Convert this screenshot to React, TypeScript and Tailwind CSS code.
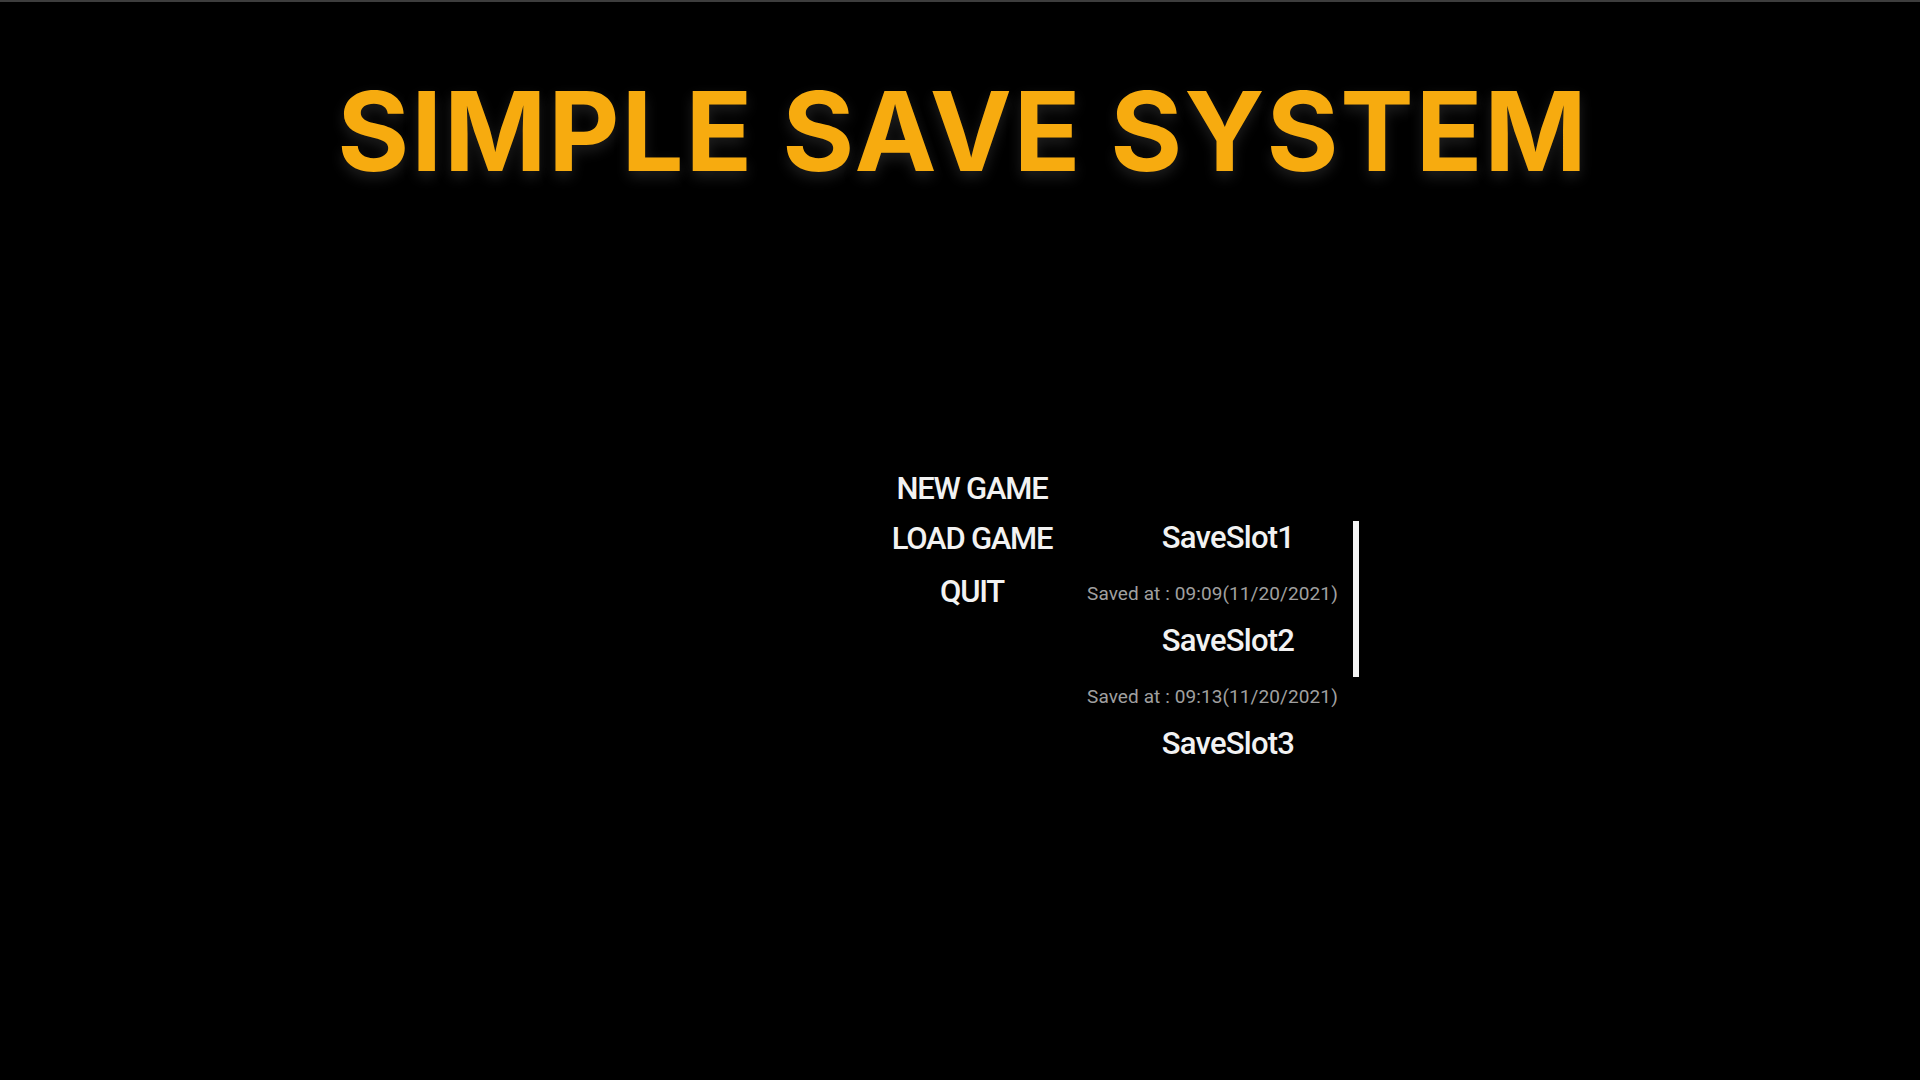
const menuItems = ["NEW GAME", "LOAD GAME", "QUIT"];

const saveSlots = [
  { name: "SaveSlot1", savedAt: "09:09(11/20/2021)" },
  { name: "SaveSlot2", savedAt: "09:13(11/20/2021)" },
  { name: "SaveSlot3", savedAt: null },
];

function SlotEntry({ name, savedAt }: { name: string; savedAt: string | null }) {
  return (
    <div className="flex flex-col">
      <button className="w-[282px] text-center text-[31px] leading-none font-medium tracking-[-0.025em] text-[#f2f2f2]">
        {name}
      </button>
      {savedAt && (
        <span className="mt-[31px] mb-[22px] text-[19px] leading-none tracking-[0.005em] text-[#a0a0a0]">
          Saved at : {savedAt}
        </span>
      )}
    </div>
  );
}

export default function App() {
  return (
    <div
      className="min-h-screen h-[1080px] bg-black border-t-2 border-[#3d3d3d] overflow-hidden"
      style={{ fontFamily: "Roboto, 'Liberation Sans', sans-serif" }}
    >
      <h1
        className="mt-[74px] pl-[6px] text-center text-[110px] leading-none font-bold text-[#f7ab0f] tracking-[0.017em] [text-shadow:0_6px_14px_rgba(90,90,90,0.35)]"
        style={{ fontFamily: "Inter, 'Liberation Sans', sans-serif" }}
      >
        SIMPLE SAVE SYSTEM
      </h1>

      <div className="mt-[287px] ml-[872px] flex items-start">
        {/* main menu */}
        <div className="w-[200px] flex flex-col items-center">
          <button className="text-[31px] leading-none font-medium tracking-[-0.04em] text-[#f2f2f2]">
            {menuItems[0]}
          </button>
          <button className="mt-[19px] text-[31px] leading-none font-medium tracking-[-0.04em] text-[#f2f2f2]">
            {menuItems[1]}
          </button>
          <button className="mt-[22px] text-[31px] leading-none font-medium tracking-[-0.04em] text-[#f2f2f2]">
            {menuItems[2]}
          </button>
        </div>

        {/* save slot list with its scrollbar */}
        <div className="ml-[15px] mt-[49px] flex items-start">
          <div className="flex flex-col">
            {saveSlots.map((slot) => (
              <SlotEntry key={slot.name} name={slot.name} savedAt={slot.savedAt} />
            ))}
          </div>
          <div className="-ml-[16px] -mt-[1px] w-[6px] h-[156px] bg-[#f4f4f4]" />
        </div>
      </div>
    </div>
  );
}
